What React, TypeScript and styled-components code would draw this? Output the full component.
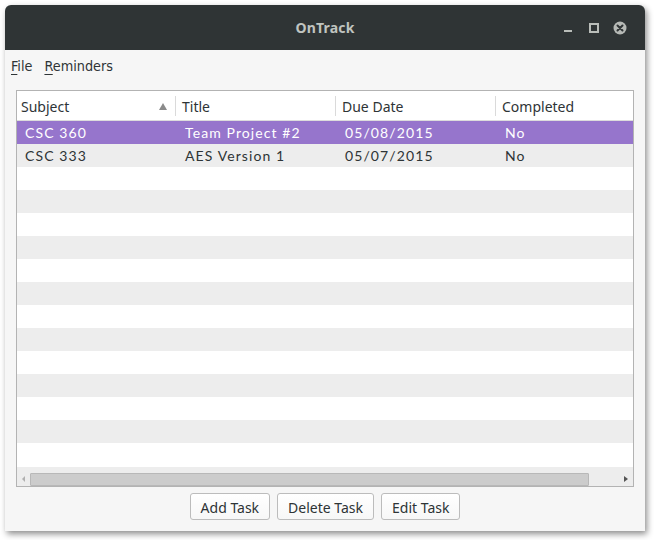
import React from "react";
import styled, { createGlobalStyle } from "styled-components";

const Global = createGlobalStyle`
  html, body { margin: 0; padding: 0; background: #ffffff; }
  body { font-family: "Noto Sans", "DejaVu Sans", sans-serif; }
`;

const Page = styled.div`
  width: 654px;
  height: 540px;
  padding: 5px 9px 9px 5px;
  box-sizing: border-box;
`;

const Window = styled.div`
  width: 640px;
  height: 526px;
  display: flex;
  flex-direction: column;
  background: #f6f6f6;
  border-radius: 6px 6px 0 0;
  box-shadow: 2px 3px 6px rgba(0, 0, 0, 0.45);
  overflow: hidden;
`;

const TitleBar = styled.div`
  height: 45px;
  flex: none;
  background: #2f3435;
  display: flex;
  align-items: center;
  justify-content: center;
  position: relative;
  color: #c0c4c0;
  font-family: "Noto Sans", sans-serif;
  font-weight: 700;
  font-size: 14px;
  letter-spacing: 0.2px;
`;

const Controls = styled.div`
  position: absolute;
  right: 18px;
  top: 0;
  height: 45px;
  display: flex;
  align-items: center;
  gap: 13px;
`;

const MenuBar = styled.div`
  height: 34px;
  flex: none;
  display: flex;
  align-items: center;
  gap: 12px;
  padding-left: 6px;
  padding-bottom: 2px;
  box-sizing: border-box;
  font-family: "DejaVu Sans Condensed", "DejaVu Sans", sans-serif;
  font-size: 14.3px;
  color: #2e3436;
`;

const MenuItem = styled.span`
  & u { text-decoration: underline; text-underline-offset: 3px; }
`;

const Body = styled.div`
  flex: 1;
  display: flex;
  flex-direction: column;
  padding: 6px 11px 12px 11px;
  gap: 6px;
`;

const TableFrame = styled.div`
  height: 397px;
  box-sizing: border-box;
  border: 1px solid #b3b3b3;
  background: #ffffff;
  display: flex;
  flex-direction: column;
`;

const HeaderRow = styled.div`
  height: 30px;
  flex: none;
  display: grid;
  grid-template-columns: 158px 160px 160px 1fr;
  border-bottom: 1px solid #dcdcdc;
  box-sizing: border-box;
  font-family: "Noto Sans", sans-serif;
  font-size: 14px;
  color: #2e3436;
`;

const HeaderCell = styled.div<{ $sep?: boolean }>`
  display: flex;
  align-items: center;
  padding-left: ${(p) => (p.$sep ? 6 : 4)}px;
  padding-right: 8px;
  padding-top: 1px;
  border-left: ${(p) => (p.$sep ? "1px solid #dadada" : "none")};
  margin: ${(p) => (p.$sep ? "5px 0 5px 0" : "0")};
  justify-content: space-between;
`;

const SortArrow = styled.span`
  width: 0;
  height: 0;
  border-left: 4px solid transparent;
  border-right: 4px solid transparent;
  border-bottom: 7px solid #8a8a8a;
`;

const Rows = styled.div`
  flex: 1;
  display: flex;
  flex-direction: column;
`;

const Row = styled.div<{ $variant: "sel" | "even" | "odd" }>`
  height: 23px;
  flex: none;
  display: grid;
  grid-template-columns: 160px 160px 160px 1fr;
  align-items: center;
  background: ${(p) =>
    p.$variant === "sel" ? "#9675cc" : p.$variant === "even" ? "#ededed" : "#ffffff"};
  color: ${(p) => (p.$variant === "sel" ? "#ffffff" : "#2e3436")};
  font-family: "Lato", "Noto Sans", sans-serif;
  font-size: 14px;
  letter-spacing: 1.1px;
`;

const Cell = styled.div`
  padding-left: 8px;
  white-space: nowrap;
`;

const ScrollArea = styled.div`
  height: 19px;
  flex: none;
  background: #ededed;
  display: flex;
  align-items: center;
  padding: 0 5px;
  gap: 5px;
  box-sizing: border-box;
`;

const Arrow = styled.span<{ $dir: "l" | "r" }>`
  width: 0;
  height: 0;
  border-top: 3px solid transparent;
  border-bottom: 3px solid transparent;
  ${(p) =>
    p.$dir === "l"
      ? "border-right: 3px solid #b0b0b0;"
      : "border-left: 4px solid #555555;"}
  margin-top: 4px;
`;

const Trough = styled.div`
  flex: 1;
  height: 12px;
  margin-top: 5px;
  display: flex;
  padding-right: 30px;
`;

const Slider = styled.div`
  flex: 1;
  height: 11px;
  background: #cccccc;
  border: 1px solid #b8b8b8;
  border-radius: 1px;
`;

const ButtonRow = styled.div`
  display: flex;
  justify-content: center;
  gap: 7px;
`;

const Button = styled.button`
  height: 27px;
  padding: 1px 10px 0;
  background: linear-gradient(#ffffff, #f7f7f7);
  border: 1px solid #bcbcbc;
  border-radius: 3px;
  font-family: "Noto Sans", sans-serif;
  font-size: 14px;
  color: #2e3436;
`;

const rows = [
  { s: "CSC 360", t: "Team Project #2", d: "05/08/2015", c: "No" },
  { s: "CSC 333", t: "AES Version 1", d: "05/07/2015", c: "No" },
];

export default function App() {
  const empty = Array.from({ length: 13 });
  return (
    <Page>
      <Global />
      <Window>
        <TitleBar>
          OnTrack
          <Controls>
            <svg width="12" height="12" viewBox="0 0 12 12">
              <rect x="1" y="8" width="8" height="2" fill="#b9bdb9" />
            </svg>
            <svg width="12" height="12" viewBox="0 0 12 12">
              <rect x="2" y="2" width="8" height="8" fill="none" stroke="#b9bdb9" strokeWidth="2" />
            </svg>
            <svg width="14" height="14" viewBox="0 0 14 14">
              <circle cx="7" cy="7" r="6.5" fill="#b6b9b6" />
              <path d="M4.5 4.5 L9.5 9.5 M9.5 4.5 L4.5 9.5" stroke="#2f3435" strokeWidth="2" strokeLinecap="round" />
            </svg>
          </Controls>
        </TitleBar>
        <MenuBar>
          <MenuItem><u>F</u>ile</MenuItem>
          <MenuItem><u>R</u>eminders</MenuItem>
        </MenuBar>
        <Body>
          <TableFrame>
            <HeaderRow>
              <HeaderCell>
                Subject
                <SortArrow />
              </HeaderCell>
              <HeaderCell $sep>Title</HeaderCell>
              <HeaderCell $sep>Due Date</HeaderCell>
              <HeaderCell $sep>Completed</HeaderCell>
            </HeaderRow>
            <Rows>
              {rows.map((r, i) => (
                <Row key={i} $variant={i === 0 ? "sel" : "even"}>
                  <Cell>{r.s}</Cell>
                  <Cell>{r.t}</Cell>
                  <Cell>{r.d}</Cell>
                  <Cell>{r.c}</Cell>
                </Row>
              ))}
              {empty.map((_, i) => (
                <Row key={"e" + i} $variant={i % 2 === 0 ? "odd" : "even"} />
              ))}
            </Rows>
            <ScrollArea>
              <Arrow $dir="l" />
              <Trough>
                <Slider />
              </Trough>
              <Arrow $dir="r" />
            </ScrollArea>
          </TableFrame>
          <ButtonRow>
            <Button>Add Task</Button>
            <Button>Delete Task</Button>
            <Button>Edit Task</Button>
          </ButtonRow>
        </Body>
      </Window>
    </Page>
  );
}
